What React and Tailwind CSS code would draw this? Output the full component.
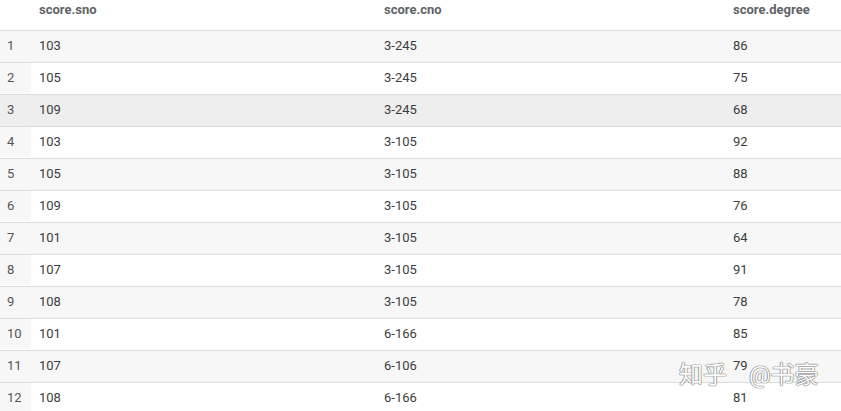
import React from 'react';

const rows = [
  ['103', '3-245', '86'],
  ['105', '3-245', '75'],
  ['109', '3-245', '68'],
  ['103', '3-105', '92'],
  ['105', '3-105', '88'],
  ['109', '3-105', '76'],
  ['101', '3-105', '64'],
  ['107', '3-105', '91'],
  ['108', '3-105', '78'],
  ['101', '6-166', '85'],
  ['107', '6-106', '79'],
  ['108', '6-166', '81'],
];

const cols = 'grid grid-cols-[31px_345px_349px_1fr]';

export default function App() {
  return (
    <div className="relative w-[841px] h-[411px] overflow-hidden bg-white text-[13px] text-[#3c3c3c]" style={{ fontFamily: 'Roboto, "Noto Sans CJK SC", sans-serif' }}>
      <div className={`${cols} h-[30px] font-bold text-[#5f6368]`}>
        <div />
        <div className="pl-2 pt-[1px] leading-[18px]">score.sno</div>
        <div className="pl-2 pt-[1px] leading-[18px]">score.cno</div>
        <div className="pl-2 pt-[1px] leading-[18px]">score.degree</div>
      </div>
      {rows.map((r, i) => {
        const bg = i === 2 ? 'bg-[#efeeef]' : i % 2 === 0 ? 'bg-[#f7f7f7]' : 'bg-white';
        return (
          <div key={i} className={`${cols} h-[32px] border-t border-[#dcdcdc] items-center pb-[1px] ${bg}`}>
            <div className={`h-full flex items-center pl-[7px] ${i === 2 ? 'bg-[#efeeef]' : 'bg-[#f7f7f7]'} text-[#555]`}>{i + 1}</div>
            <div className="pl-2">{r[0]}</div>
            <div className="pl-2">{r[1]}</div>
            <div className="pl-2">{r[2]}</div>
          </div>
        );
      })}
      <div
        className="absolute left-[679px] top-[360px] flex gap-[22px] text-[24px] leading-[30px] text-white"
        style={{ textShadow: '0 0 1px #666, 0 0 1px #666, 0 0 1px #666' }}
      >
        <span>知乎</span>
        <span>@书豪</span>
      </div>
    </div>
  );
}
